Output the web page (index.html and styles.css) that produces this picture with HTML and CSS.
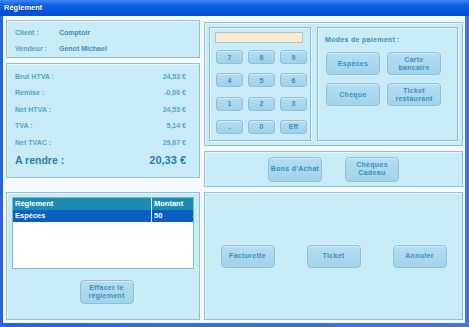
FILE: index.html
```html
<!DOCTYPE html>
<html lang="fr">
<head>
  <meta charset="UTF-8" />
  <title>Réglement</title>
  <link rel="stylesheet" href="styles.css">
</head>
<body>
  <div class="window">
    <div class="titlebar">Réglement</div>
    <div class="client">
      <div class="col-left">
        <div class="panel panel-client">
          <div class="info-row"><span class="label">Client :</span><span class="value">Comptoir</span></div>
          <div class="info-row"><span class="label">Vendeur :</span><span class="value">Genot Michael</span></div>
        </div>
        <div class="panel panel-totals">
          <div class="total-row"><span>Brut HTVA :</span><span>24,53 €</span></div>
          <div class="total-row"><span>Remise :</span><span>-0,00 €</span></div>
          <div class="total-row"><span>Net HTVA :</span><span>24,53 €</span></div>
          <div class="total-row"><span>TVA :</span><span>5,14 €</span></div>
          <div class="total-row"><span>Net TVAC :</span><span>29,67 €</span></div>
          <div class="total-row due"><span>A rendre :</span><span>20,33 €</span></div>
        </div>
        <div class="panel panel-list">
          <div class="pay-table">
            <div class="pay-head"><span>Réglement</span><span>Montant</span></div>
            <div class="pay-row selected"><span>Espèces</span><span>50</span></div>
          </div>
          <div class="list-actions">
            <button class="btn btn-wide">Effacer le<br>réglement</button>
          </div>
        </div>
      </div>
      <div class="col-right">
        <div class="panel panel-pay">
          <div class="subpanel keypad">
            <div class="display"></div>
            <div class="keys">
              <button class="key">7</button>
              <button class="key">8</button>
              <button class="key">9</button>
              <button class="key">4</button>
              <button class="key">5</button>
              <button class="key">6</button>
              <button class="key">1</button>
              <button class="key">2</button>
              <button class="key">3</button>
              <button class="key">.</button>
              <button class="key">0</button>
              <button class="key">Eff</button>
            </div>
          </div>
          <div class="subpanel modes">
            <div class="modes-title">Modes de paiement :</div>
            <div class="modes-grid">
              <button class="btn">Espèces</button>
              <button class="btn">Carte<br>bancaire</button>
              <button class="btn">Chèque</button>
              <button class="btn">Ticket<br>restaurant</button>
            </div>
          </div>
        </div>
        <div class="panel panel-vouchers">
          <button class="btn btn-voucher">Bons d'Achat</button>
          <button class="btn btn-voucher">Chèques<br>Cadeau</button>
        </div>
        <div class="panel panel-actions">
          <button class="btn">Facturette</button>
          <button class="btn">Ticket</button>
          <button class="btn">Annuler</button>
        </div>
      </div>
    </div>
  </div>
</body>
</html>
```

FILE: styles.css
```css
* {
  box-sizing: border-box;
}
body {
  margin: 0;
  padding: 0;
  font-family: "Liberation Sans", Arial, sans-serif;
  background: #fff;
}
.window {
  width: 469px;
  height: 327px;
  display: flex;
  flex-direction: column;
  background: linear-gradient(90deg, #2a62de, #3a6fe0 50%, #4a70d8);
}
.titlebar {
  height: 16px;
  line-height: 16px;
  padding-left: 4px;
  color: #fff;
  font-size: 7.5px;
  font-weight: bold;
  text-shadow: 1px 1px 0 #0a3a9a;
  background: linear-gradient(#3d86f4, #0a5de6 35%, #0452dc 80%, #0a4bcc);
}
.client {
  flex: 1;
  margin: 0 4px 4px 3px;
  padding: 0 2px 0 3px;
  background: #f6fcfe;
  display: flex;
  gap: 4px;
}
.col-left {
  width: 194px;
  padding-top: 4px;
  display: flex;
  flex-direction: column;
}
.col-right {
  width: 259px;
  padding-top: 6px;
  display: flex;
  flex-direction: column;
  gap: 5px;
}
.panel {
  background: #c9ebf8;
  border: 1px solid #93bfd4;
  box-shadow: inset 1px 1px 0 #e6f6fc;
}
.panel-client {
  height: 38px;
  padding: 3px 0 0 8px;
}
.info-row {
  display: flex;
  height: 16px;
  align-items: center;
  font-size: 7px;
  font-weight: bold;
}
.label {
  width: 44px;
  color: #4ea2c6;
}
.value {
  color: #3a8fb8;
}
.panel-totals {
  height: 115px;
  margin-top: 5px;
  padding: 4px 13px 0 8px;
}
.total-row {
  display: flex;
  justify-content: space-between;
  align-items: center;
  height: 16.5px;
  font-size: 7px;
  font-weight: bold;
  color: #52a6cb;
}
.total-row.due {
  height: 18px;
  font-size: 10.5px;
  color: #1f81ad;
}
.total-row.due span:last-child {
  font-size: 11px;
}
.panel-list {
  height: 128px;
  margin-top: 14px;
  padding: 4px 5px 0 5px;
}
.pay-table {
  height: 72px;
  background: #fff;
  border: 1px solid #86b6cd;
}
.pay-head,
.pay-row {
  display: grid;
  grid-template-columns: 138px 1fr;
  font-size: 7.5px;
  font-weight: bold;
  color: #fff;
}
.pay-head {
  height: 12px;
  line-height: 12px;
  background: #1c8db2;
}
.pay-row {
  height: 12px;
  line-height: 12px;
}
.pay-head span,
.pay-row span {
  padding-left: 2px;
}
.pay-head span + span,
.pay-row span + span {
  border-left: 1px solid #e8f4f8;
}
.pay-row.selected {
  background: #0b5fc2;
}
.list-actions {
  margin-top: 11px;
  padding-left: 7px;
  text-align: center;
}
.btn {
  width: 54px;
  height: 23px;
  padding: 0;
  background: linear-gradient(#b4def2, #a2d3ec);
  border: 1px solid #8bc0da;
  border-radius: 4px;
  box-shadow: inset 0 1px 0 rgba(255, 255, 255, 0.45), 0 0 0 1px rgba(210, 236, 248, 0.8);
  color: #3a8fba;
  font-family: "Liberation Sans", Arial, sans-serif;
  font-size: 7px;
  font-weight: bold;
  letter-spacing: 0.3px;
  line-height: 8px;
}
.btn-wide {
  height: 24px;
}
.btn-voucher {
  height: 25px;
}
.panel-pay {
  height: 124px;
  padding: 4px;
  display: flex;
  gap: 6px;
}
.subpanel {
  border: 1px solid #8fbad0;
  box-shadow: inset 1px 1px 0 #e6f6fc, 1px 1px 0 #e6f6fc;
}
.keypad {
  width: 102px;
  padding: 4px 0 0 5px;
}
.display {
  width: 88px;
  height: 11px;
  background: #fbe9cf;
  border: 1px solid #a8c3d1;
}
.keys {
  margin: 7px 0 0 1px;
  display: grid;
  grid-template-columns: repeat(3, 27px);
  grid-auto-rows: 14px;
  column-gap: 5px;
  row-gap: 9.3px;
}
.key {
  padding: 0;
  background: linear-gradient(#b2ddf1, #a0d2eb);
  border: 1px solid #8bc0da;
  border-radius: 3px;
  box-shadow: inset 0 1px 0 rgba(255, 255, 255, 0.45), 0 0 0 1px rgba(210, 236, 248, 0.8);
  color: #3a8fba;
  font-family: "Liberation Sans", Arial, sans-serif;
  font-size: 7px;
  font-weight: bold;
}
.modes {
  flex: 1;
  padding: 7px 0 0 7px;
}
.modes-title {
  height: 10px;
  line-height: 10px;
  font-size: 7px;
  font-weight: bold;
  letter-spacing: 0.3px;
  color: #3a8fb8;
}
.modes-grid {
  margin: 7px 0 0 1px;
  display: grid;
  grid-template-columns: repeat(2, 54px);
  grid-auto-rows: 23px;
  column-gap: 7px;
  row-gap: 8px;
}
.panel-vouchers {
  height: 36px;
  display: flex;
  justify-content: center;
  align-items: center;
  gap: 23px;
}
.panel-actions {
  height: 128px;
  display: flex;
  justify-content: center;
  align-items: center;
  gap: 32px;
}
```
